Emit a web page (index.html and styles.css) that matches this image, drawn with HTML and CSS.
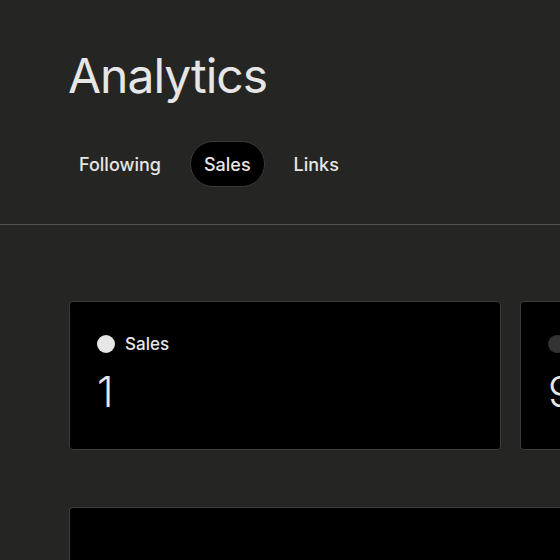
FILE: index.html
```html
<!DOCTYPE html>
<html lang="en">
<head>
<meta charset="utf-8">
<title>Analytics</title>
<link rel="stylesheet" href="styles.css">
</head>
<body>
<header class="header">
  <h1 class="title">Analytics</h1>
  <nav class="tabs">
    <a class="tab">Following</a>
    <a class="tab active">Sales</a>
    <a class="tab">Links</a>
  </nav>
</header>
<main class="main">
  <div class="stats">
    <section class="card">
      <div class="legend"><span class="dot"></span><span>Sales</span></div>
      <div class="value">1</div>
    </section>
    <section class="card">
      <div class="legend"><span class="dot dim"></span><span>Views</span></div>
      <div class="value">9</div>
    </section>
  </div>
  <section class="chart"></section>
</main>
</body>
</html>
```

FILE: styles.css
```css
* { box-sizing: border-box; }
html, body { margin: 0; }
body {
  background: #252523;
  color: #e6e6e6;
  font-family: Inter, "Noto Sans", sans-serif;
  width: 560px;
  height: 560px;
  overflow: hidden;
}
.header {
  padding: 48px 0 0 64px;
  height: 225px;
  border-bottom: 1px solid #555553;
}
.title {
  margin: 0 0 0 4px;
  font-size: 48px;
  font-weight: 400;
  line-height: 56px;
  letter-spacing: -1px;
}
.tabs {
  display: flex;
  gap: 15px;
  margin: 37px 0 0 1px;
}
.tab {
  padding: 0 13px;
  height: 46px;
  display: flex;
  align-items: center;
  font-size: 18px;
  font-weight: 500;
  border-radius: 23px;
  border: 1px solid transparent;
  color: #e6e6e6;
}
.tab.active {
  background: #000;
  border-color: #3a3a38;
}
.main {
  padding: 76px 0 0 69px;
}
.stats {
  display: flex;
  gap: 19px;
  width: 560px;
  overflow: hidden;
}
.card {
  width: 432px;
  flex: none;
  height: 149px;
  background: #000;
  border: 1px solid #3c3c3a;
  border-radius: 4px;
  padding: 32px 27px;
}
.legend {
  display: flex;
  align-items: center;
  gap: 10px;
  font-size: 17px;
  font-weight: 500;
  line-height: 20px;
}
.dot {
  width: 18px;
  height: 18px;
  border-radius: 50%;
  background: #e6e6e6;
}
.dot.dim { background: #333331; }
.value {
  margin-top: 14px;
  font-size: 42px;
  line-height: 48px;
  font-weight: 300;
}
.chart {
  margin-top: 57px;
  width: 491px;
  height: 100px;
  background: #000;
  border: 1px solid #3c3c3a;
  border-right: none;
  border-bottom: none;
  border-radius: 4px 0 0 0;
}
```
